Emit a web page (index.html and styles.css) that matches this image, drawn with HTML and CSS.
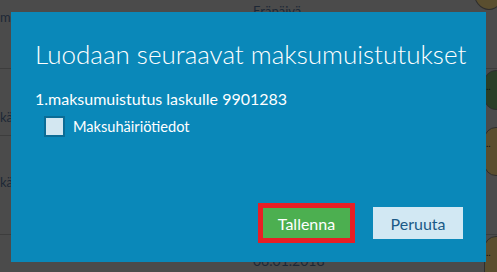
FILE: index.html
```html
<!DOCTYPE html>
<html lang="fi">
<head>
    <meta charset="UTF-8">
    <meta name="viewport" content="width=device-width, initial-scale=1.0">
    <title>Maksumuistutukset</title>
    <link rel="stylesheet" href="styles.css">
</head>
<body>
    <div class="page">
        <div class="list-row row-head">
            <span class="cell-name">mi</span>
            <span class="cell-date">Eräpäivä</span>
            <span class="cell-status"><span class="pill pill-top"></span></span>
        </div>
        <div class="list-row row-a">
            <span class="cell-name">kä</span>
            <span class="cell-date"></span>
            <span class="cell-status"><span class="pill pill-green">..</span></span>
        </div>
        <div class="list-row row-b">
            <span class="cell-name">kä</span>
            <span class="cell-date"></span>
            <span class="cell-status"><span class="pill pill-brown">..</span></span>
        </div>
        <div class="list-row row-d">
            <span class="cell-name"></span>
            <span class="cell-date">06.01.2018</span>
            <span class="cell-status"><span class="pill pill-brown">..</span></span>
        </div>
    </div>

    <div class="dialog">
        <h2 class="dialog-title">Luodaan seuraavat maksumuistutukset</h2>
        <p class="dialog-line">1.maksumuistutus laskulle 9901283</p>
        <label class="check-row">
            <span class="check-box"></span>
            <span>Maksuhäiriötiedot</span>
        </label>
        <div class="dialog-buttons">
            <button class="btn btn-save">Tallenna</button>
            <button class="btn btn-cancel">Peruuta</button>
        </div>
    </div>
</body>
</html>
```
FILE: styles.css
```css
body {
    margin: 0;
    padding: 0;
    background-color: #4b4b4b;
    font-family: "Lato", "Segoe UI", sans-serif;
    overflow: hidden;
}
.page {
    width: 497px;
    height: 272px;
    overflow: hidden;
    color: #1d2836;
    font-size: 13px;
}
.list-row {
    display: flex;
    border-bottom: 1px solid #3d3d3d;
    box-sizing: border-box;
}
.row-head {
    height: 69px;
}
.row-a {
    height: 67px;
}
.row-b {
    height: 99px;
}
.row-d {
    height: 37px;
    border-bottom: none;
}
.cell-name {
    width: 253px;
    padding-top: 9px;
}
.row-a .cell-name {
    padding-top: 40px;
}
.row-b .cell-name {
    padding-top: 38px;
}
.cell-date {
    flex: 1;
    padding-top: 4px;
    line-height: 14px;
}
.row-d .cell-date {
    padding-top: 19px;
    font-size: 14px;
}
.cell-status {
    width: 24px;
    position: relative;
}
.pill {
    position: absolute;
    left: 11px;
    width: 30px;
    border: 1px solid #2e2e2e;
    border-radius: 12px;
    color: #111;
    font-size: 10px;
    line-height: 30px;
    text-indent: 1px;
}
.pill-top {
    top: -30px;
    left: 0;
    height: 38px;
    background: #5a4e2f;
    border-radius: 50%;
}
.pill-green {
    top: 1px;
    height: 38px;
    background: #2b3e27;
}
.pill-brown {
    top: -9px;
    height: 47px;
    background: #5a4e2f;
}
.row-d .pill-brown {
    top: 1px;
    height: 60px;
}

.dialog {
    position: absolute;
    left: 11px;
    top: 12px;
    width: 475px;
    height: 250px;
    box-sizing: border-box;
    padding: 26px 23px 23px 24px;
    background-color: #0a88b9;
    color: #ffffff;
    display: flex;
    flex-direction: column;
}
.dialog-title {
    margin: 0;
    font-size: 26px;
    font-weight: 300;
    line-height: 32px;
    white-space: nowrap;
}
.dialog-line {
    margin: 19px 0 0 0;
    font-size: 16px;
    line-height: 20px;
}
.check-row {
    display: flex;
    align-items: center;
    gap: 8px;
    margin: 7px 0 0 9px;
    font-size: 14.6px;
}
.check-box {
    width: 17px;
    height: 17px;
    border: 2px solid #0a6c96;
    background-color: #d3e7f1;
}
.dialog-buttons {
    margin-top: auto;
    display: flex;
    justify-content: flex-end;
    align-items: center;
    gap: 23px;
}
.btn {
    border: none;
    font-family: "Lato", "Segoe UI", sans-serif;
    font-size: 16px;
    padding: 0;
    cursor: pointer;
}
.btn-save {
    width: 87px;
    height: 30px;
    background-color: #4caf50;
    color: #ffffff;
    outline: 5px solid #e81e25;
}
.btn-cancel {
    width: 90px;
    height: 32px;
    background-color: #d2e8f3;
    color: #1a5a87;
}
```
